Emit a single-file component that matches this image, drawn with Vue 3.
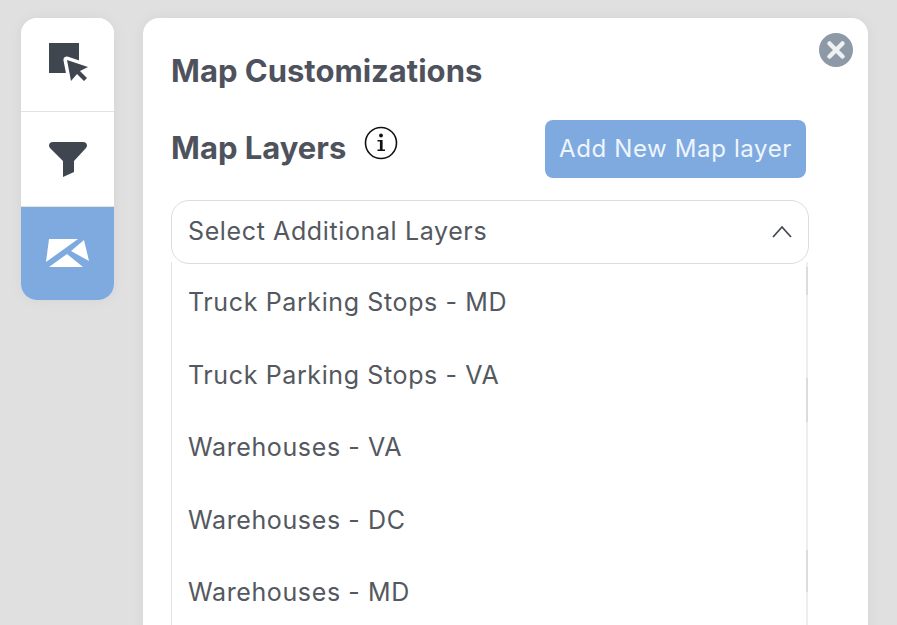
<script setup>
const layers = [
  'Truck Parking Stops - MD',
  'Truck Parking Stops - VA',
  'Warehouses - VA',
  'Warehouses - DC',
  'Warehouses - MD',
]
</script>

<template>
  <main class="page">
    <nav class="rail">
      <button class="rail-item">
        <svg class="pick" width="40" height="39" viewBox="0 0 40 39">
          <rect width="30" height="30" fill="#3f4650" />
          <path d="M18 17L39 24L31 28L38 35L35 38L28 31L22 38Z" fill="#fff" stroke="#fff" stroke-width="7" stroke-linejoin="round" />
          <path d="M18 17L39 24L31 28L38 35L35 38L28 31L22 38Z" fill="#3f4650" />
        </svg>
      </button>
      <button class="rail-item">
        <svg width="38" height="35" viewBox="0 0 38 35">
          <path d="M4 0H34C38 0 39 4 37 6L25 19V30L14 35V19L1 6C-1 4 0 0 4 0Z" fill="#3f4650" />
        </svg>
      </button>
      <button class="rail-item active">
        <svg width="46" height="32" viewBox="0 0 46 32">
          <path d="M4 1H33L1 24ZM39 2L44 23L26 13ZM22 16L38 29H4Z" fill="#fff" />
        </svg>
      </button>
    </nav>

    <section class="panel">
      <button class="close">
        <svg width="34" height="34" viewBox="0 0 34 34">
          <circle cx="17" cy="17" r="17" fill="#8d99a6" />
          <path d="M10.5 10.5L23.5 23.5M23.5 10.5L10.5 23.5" stroke="#eef0f2" stroke-width="4.5" stroke-linecap="round" />
        </svg>
      </button>

      <h1>Map Customizations</h1>

      <div class="layers-head">
        <h2>Map Layers</h2>
        <svg class="info" width="34" height="34" viewBox="0 0 34 34">
          <circle cx="17" cy="17" r="15.5" fill="none" stroke="#111" stroke-width="1.6" />
          <circle cx="17" cy="9.5" r="1.9" fill="#111" />
          <path d="M13.5 14H18.6V23.4H21V25H13.5V23.4H15.9V15.6H13.5Z" fill="#111" />
        </svg>
        <button class="add">Add New Map layer</button>
      </div>

      <div class="select">
        <div class="select-head">
          <span>Select Additional Layers</span>
          <svg width="22" height="14" viewBox="0 0 22 14">
            <path d="M2 13L11 3L20 13" fill="none" stroke="#444b55" stroke-width="1.8" />
          </svg>
        </div>
        <ul class="options">
          <li v-for="layer in layers" :key="layer">{{ layer }}</li>
        </ul>
      </div>
    </section>
  </main>
</template>

<style scoped>
.page {
  width: 897px;
  height: 625px;
  box-sizing: border-box;
  padding: 18px 0 0 21px;
  display: flex;
  align-items: flex-start;
  gap: 29px;
  overflow: hidden;
  background: #e0e0e0;
  font-family: Inter, "Liberation Sans", sans-serif;
}

.rail {
  width: 93px;
  display: grid;
  grid-template-rows: 94px 95px 93px;
  border-radius: 16px;
  overflow: hidden;
  background: #fff;
  box-shadow: 0 0 14px rgba(0, 0, 0, 0.05);
}

.rail-item {
  padding: 0;
  border: none;
  border-bottom: 1px solid #e2e2e2;
  background: #fff;
  display: flex;
  align-items: center;
  justify-content: center;
}

.rail-item.active {
  border-bottom: none;
  background: #7eaae0;
}

.pick {
  margin: -4px 0 0 2px;
}

.panel {
  position: relative;
  width: 725px;
  height: 640px;
  box-sizing: border-box;
  padding: 34px 59px 0 28px;
  border-radius: 16px;
  background: #fff;
  box-shadow: 0 0 14px rgba(0, 0, 0, 0.05);
}

.close {
  position: absolute;
  top: 15px;
  right: 15px;
  padding: 0;
  border: none;
  background: none;
  display: flex;
}

h1,
h2 {
  margin: 0;
  font-size: 31px;
  line-height: 38px;
  font-weight: 700;
  color: #4e525c;
}

.layers-head {
  margin-top: 30px;
  height: 58px;
  display: flex;
  align-items: center;
}

h2 {
  margin-top: -2px;
}

.info {
  margin: -13px 0 0 18px;
}

.add {
  margin-left: auto;
  width: 261px;
  height: 58px;
  margin-right: 3px;
  padding: 0 0 2px;
  border: none;
  border-radius: 8px;
  background: #7eaae0;
  color: #eef5fc;
  font: 400 24px Inter, "Liberation Sans", sans-serif;
  letter-spacing: 0.63px;
}

.select {
  margin-top: 22px;
  color: #54585f;
  font-size: 25px;
  letter-spacing: 0.62px;
}

.select-head {
  height: 64px;
  box-sizing: border-box;
  padding: 0 15px 2px 16px;
  display: flex;
  align-items: center;
  justify-content: space-between;
  border: 1px solid #dcdcdc;
  border-radius: 18px;
  position: relative;
  z-index: 1;
  background: #fff;
}

.options {
  margin: -2px 1px 0 0;
  padding: 4px 0 0 16px;
  list-style: none;
  border-left: 1px solid #e2e2e2;
  /* bits of the controls behind the open list show at its right edge */
  background: linear-gradient(
      to bottom,
      #eeeeee 0 5px,
      #dcdcdc 5px 33px,
      #eeeeee 33px 116px,
      #dcdcdc 116px 160px,
      #eeeeee 160px 288px,
      #dcdcdc 288px 330px,
      #eeeeee 330px
    )
    right top / 2px 100% no-repeat;
}

.options li {
  height: 72.6px;
  line-height: 72.6px;
}
</style>

<style>
body {
  margin: 0;
}
</style>
